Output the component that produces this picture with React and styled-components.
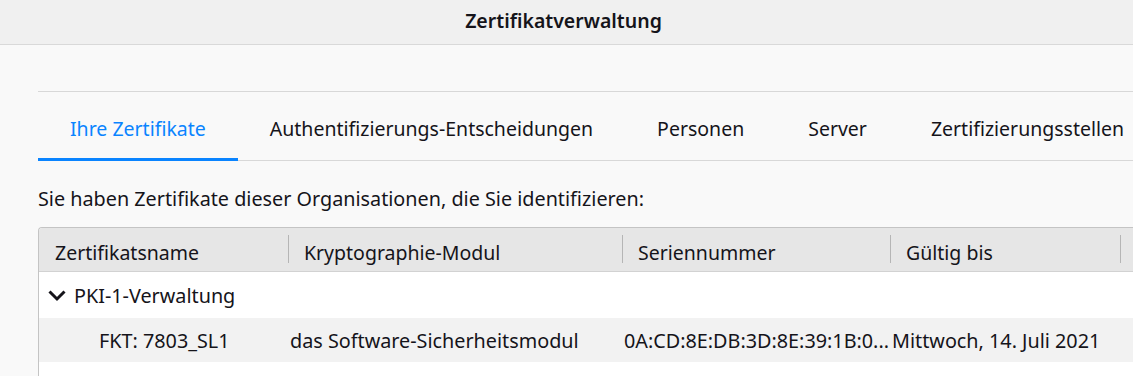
import React from "react";
import styled, { createGlobalStyle } from "styled-components";

const GlobalStyle = createGlobalStyle`
  html, body {
    margin: 0;
    padding: 0;
    background: #f9f9f9;
    font-family: "Noto Sans", "Open Sans", sans-serif;
    color: #15141a;
    overflow: hidden;
  }
`;

const Window = styled.div`
  width: 1133px;
  height: 376px;
  overflow: hidden;
  background: #f9f9f9;
`;

const TitleBar = styled.div`
  height: 45px;
  background: #f0f0f0;
  border-bottom: 1px solid #d9d9d9;
  display: flex;
  align-items: center;
  justify-content: center;
  font-size: 19.5px;
  font-weight: 600;
  padding: 0 6px 3px 0;
  box-sizing: border-box;
`;

const Content = styled.div`
  padding: 46px 0 0 38px;
`;

const Tabs = styled.div`
  display: flex;
  height: 70px;
  border-top: 1px solid #d8d8d8;
  border-bottom: 1px solid #d8d8d8;
  box-sizing: border-box;
  white-space: nowrap;
`;

const Tab = styled.div`
  position: relative;
  display: flex;
  align-items: center;
  padding: 4px 32px 0;
  font-size: 19.5px;
  color: ${(p) => (p.$active ? "#0a84ff" : "#15141a")};

  &::after {
    content: "";
    position: absolute;
    left: 0;
    right: 0;
    bottom: -1px;
    height: 3px;
    background: ${(p) => (p.$active ? "#0a84ff" : "transparent")};
  }
`;

const Description = styled.p`
  margin: 0;
  height: 66px;
  display: flex;
  align-items: center;
  font-size: 19.8px;
  padding-top: 8px;
  box-sizing: border-box;
  white-space: nowrap;
`;

const Table = styled.div`
  border: 1px solid #c4c4c4;
  border-right: none;
  border-bottom: none;
  border-top-left-radius: 4px;
  overflow: hidden;
  background: #fff;
  height: 200px;
`;

const cols = "249px 334px 268px 230px 1fr";

const HeaderRow = styled.div`
  display: grid;
  grid-template-columns: ${cols};
  height: 43px;
  background: #e6e6e6;
  border-bottom: 1px solid #d2d2d2;
`;

const HeaderCell = styled.div`
  position: relative;
  display: flex;
  align-items: center;
  padding: 5px 16px 0;
  font-size: 19.5px;
  white-space: nowrap;

  &::before {
    content: ${(p) => (p.$first ? "none" : '""')};
    position: absolute;
    left: 0;
    top: 7px;
    height: 28px;
    width: 1px;
    background: #b5b5b5;
  }
`;

const Row = styled.div`
  display: grid;
  grid-template-columns: ${cols};
  height: ${(p) => p.$h}px;
  background: ${(p) => (p.$alt ? "#f2f2f2" : "#fff")};
`;

const Cell = styled.div`
  display: flex;
  align-items: center;
  gap: 7px;
  padding-left: ${(p) => p.$indent || 2}px;
  font-size: 19.8px;
  white-space: nowrap;
  overflow: hidden;
`;

const Chevron = () => (
  <svg width="20" height="20" viewBox="0 0 20 20">
    <path d="M2.5 6.5l7.5 7.5 7.5-7.5" fill="none" stroke="#15141a" strokeWidth="3" />
  </svg>
);

const tabs = [
  "Ihre Zertifikate",
  "Authentifizierungs-Entscheidungen",
  "Personen",
  "Server",
  "Zertifizierungsstellen",
];

const headers = [
  "Zertifikatsname",
  "Kryptographie-Modul",
  "Seriennummer",
  "Gültig bis",
  "",
];

export default function App() {
  return (
    <Window>
      <GlobalStyle />
      <TitleBar>Zertifikatverwaltung</TitleBar>
      <Content>
        <Tabs>
          {tabs.map((t, i) => (
            <Tab key={t} $active={i === 0}>
              {t}
            </Tab>
          ))}
        </Tabs>
        <Description>
          Sie haben Zertifikate dieser Organisationen, die Sie identifizieren:
        </Description>
        <Table>
          <HeaderRow>
            {headers.map((h, i) => (
              <HeaderCell key={i} $first={i === 0}>
                {h}
              </HeaderCell>
            ))}
          </HeaderRow>
          <Row $h={46}>
            <Cell $indent={8}>
              <Chevron />
              PKI-1-Verwaltung
            </Cell>
          </Row>
          <Row $h={44} $alt>
            <Cell $indent={60}>FKT: 7803_SL1</Cell>
            <Cell>das Software-Sicherheitsmodul</Cell>
            <Cell>0A:CD:8E:DB:3D:8E:39:1B:0...</Cell>
            <Cell>Mittwoch, 14. Juli 2021</Cell>
            <Cell />
          </Row>
        </Table>
      </Content>
    </Window>
  );
}
